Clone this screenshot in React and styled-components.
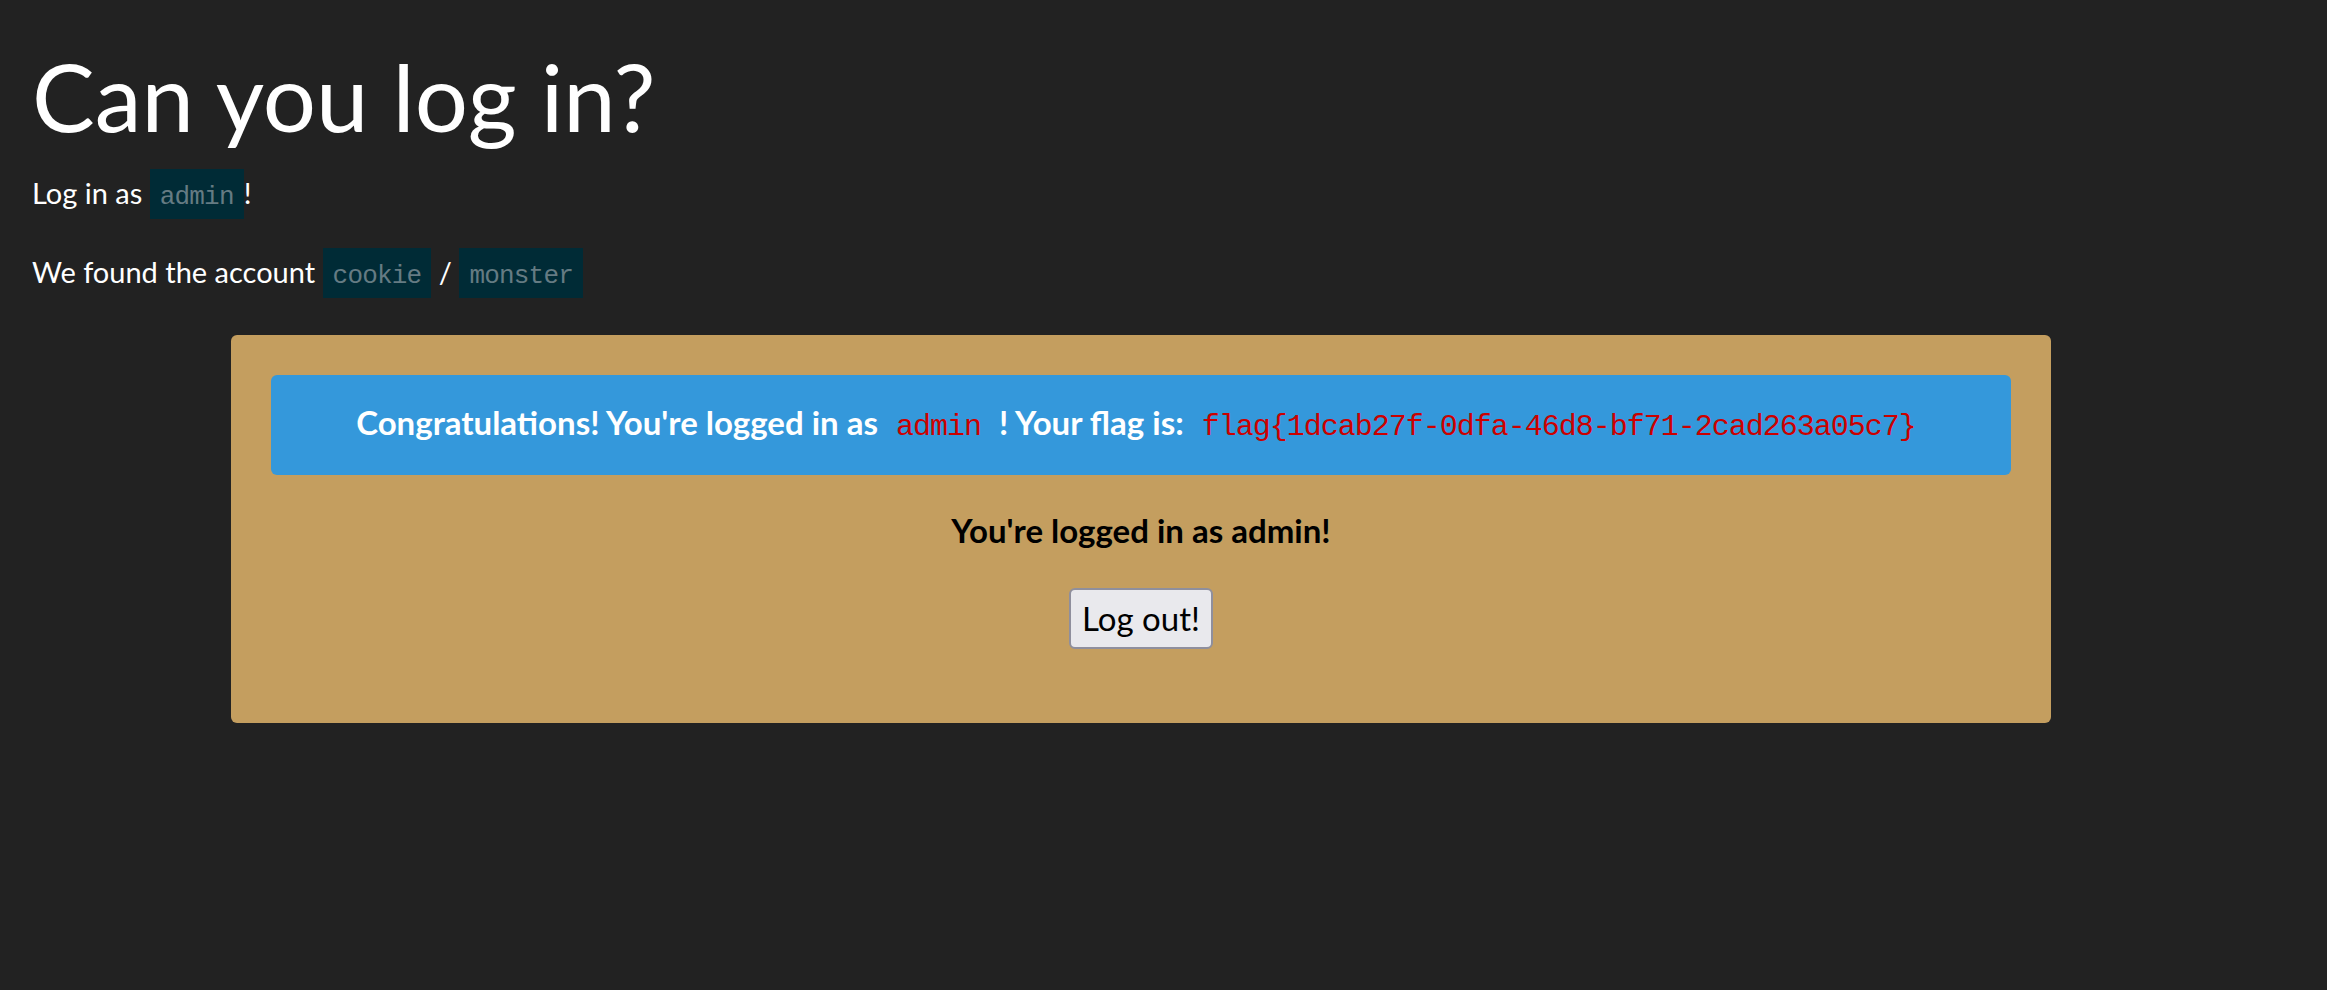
import React from 'react';
import styled, { createGlobalStyle } from 'styled-components';

const GlobalStyle = createGlobalStyle`
  html, body {
    margin: 0;
    padding: 0;
    background-color: #222222;
  }
  body {
    font-family: Lato, "Noto Sans", sans-serif;
    color: #ffffff;
  }
`

const Page = styled.div`
  padding: 40px 32px;
`

const Title = styled.h1`
  margin: 0 0 18px;
  font-size: 94px;
  font-weight: 400;
  line-height: 1.2;
  color: #ffffff;
`

const Text = styled.p`
  margin: 0 0 35.5px;
  font-size: 29px;
  line-height: 1.5;
`

const Code = styled.code`
  font-family: "Liberation Mono", "DejaVu Sans Mono", monospace;
  font-size: ${p => p.$size || 26}px;
  font-weight: 400;
  letter-spacing: ${p => p.$spacing || -0.8}px;
  line-height: 1;
  padding: 13px 10px 7px;
  background-color: ${p => (p.$flag ? 'transparent' : '#002b36')};
  color: ${p => (p.$flag ? '#cc0000' : '#657b83')};
`

const Panel = styled.div`
  display: flex;
  flex-direction: column;
  align-items: center;
  width: 1820px;
  box-sizing: border-box;
  margin: 41.5px 0 0 199px;
  padding: 40px;
  background-color: #c49e5f;
  border-radius: 6px;
`

const Alert = styled.div`
  align-self: stretch;
  box-sizing: border-box;
  height: 100px;
  margin-bottom: 37.2px;
  padding: 29px 20px 0;
  background-color: #3498db;
  border-radius: 6px;
  color: #ffffff;
  font-size: 33px;
  font-weight: 700;
  line-height: 36px;
  text-align: center;
`

const Status = styled.h3`
  margin: 0 0 39.8px;
  font-size: 33px;
  font-weight: 700;
  line-height: 36px;
  color: #000000;
  text-align: center;
`

const LogoutButton = styled.button`
  box-sizing: border-box;
  height: 61px;
  margin-bottom: 34px;
  padding: 0 11px;
  font-family: Lato, "Noto Sans", sans-serif;
  font-size: 33px;
  color: #000000;
  background-color: #e9e9ed;
  border: 2px solid #8f8f9d;
  border-radius: 6px;
  cursor: pointer;
`

export default function App() {
  return (
    <>
      <GlobalStyle />
      <Page>
        <Title>Can you log in?</Title>
        <Text>
          Log in as <Code>admin</Code>!
        </Text>
        <Text>
          We found the account <Code>cookie</Code> / <Code>monster</Code>
        </Text>

        <Panel>
          <Alert>
            Congratulations! You're logged in as{' '}
            <Code $flag $size={30} $spacing={-1}>admin</Code>
            {' '}! Your flag is:{' '}
            <Code $flag $size={30} $spacing={-1}>flag{'{'}1dcab27f-0dfa-46d8-bf71-2cad263a05c7{'}'}</Code>
          </Alert>
          <Status>You're logged in as admin!</Status>
          <LogoutButton>Log out!</LogoutButton>
        </Panel>
      </Page>
    </>
  );
}
